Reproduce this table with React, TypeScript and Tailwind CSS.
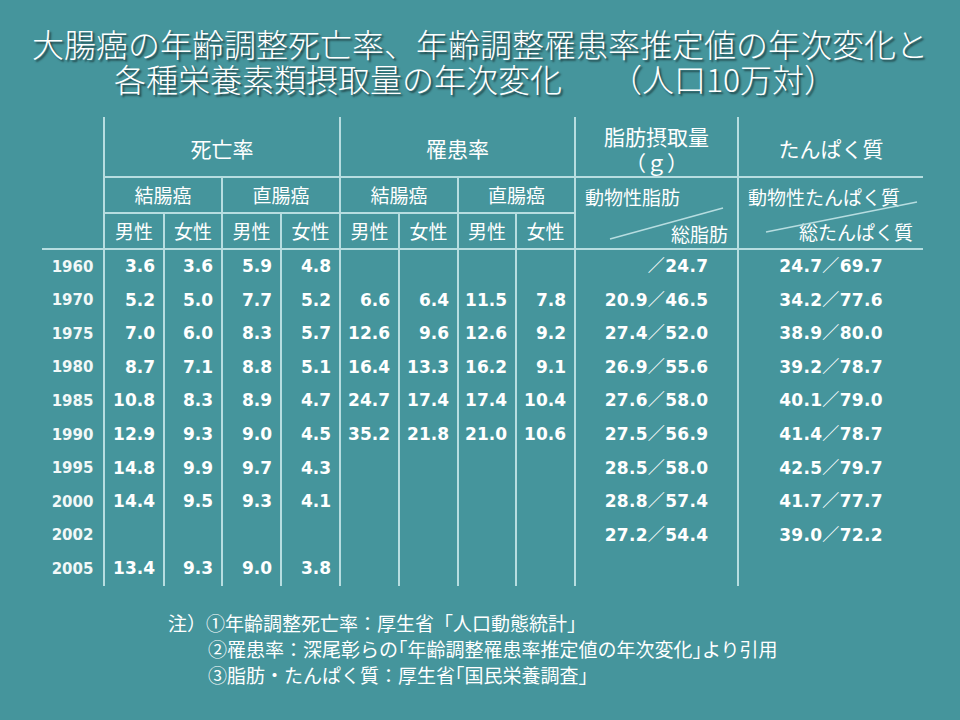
import React from 'react';

const LINE = 'border-[#b7dde0]';
const JP = "font-['Noto_Sans_CJK_JP',sans-serif]";
const NUM = "font-['DejaVu_Sans','Noto_Sans_CJK_JP',sans-serif]";

type Row = {
  year: string;
  vals: string[];
  fat: [string, string];
  protein: string;
};

const rows: Row[] = [
  { year: '1960', vals: ['3.6', '3.6', '5.9', '4.8', '', '', '', ''], fat: ['', '24.7'], protein: '24.7／69.7' },
  { year: '1970', vals: ['5.2', '5.0', '7.7', '5.2', '6.6', '6.4', '11.5', '7.8'], fat: ['20.9', '46.5'], protein: '34.2／77.6' },
  { year: '1975', vals: ['7.0', '6.0', '8.3', '5.7', '12.6', '9.6', '12.6', '9.2'], fat: ['27.4', '52.0'], protein: '38.9／80.0' },
  { year: '1980', vals: ['8.7', '7.1', '8.8', '5.1', '16.4', '13.3', '16.2', '9.1'], fat: ['26.9', '55.6'], protein: '39.2／78.7' },
  { year: '1985', vals: ['10.8', '8.3', '8.9', '4.7', '24.7', '17.4', '17.4', '10.4'], fat: ['27.6', '58.0'], protein: '40.1／79.0' },
  { year: '1990', vals: ['12.9', '9.3', '9.0', '4.5', '35.2', '21.8', '21.0', '10.6'], fat: ['27.5', '56.9'], protein: '41.4／78.7' },
  { year: '1995', vals: ['14.8', '9.9', '9.7', '4.3', '', '', '', ''], fat: ['28.5', '58.0'], protein: '42.5／79.7' },
  { year: '2000', vals: ['14.4', '9.5', '9.3', '4.1', '', '', '', ''], fat: ['28.8', '57.4'], protein: '41.7／77.7' },
  { year: '2002', vals: ['', '', '', '', '', '', '', ''], fat: ['27.2', '54.4'], protein: '39.0／72.2' },
  { year: '2005', vals: ['13.4', '9.3', '9.0', '3.8', '', '', '', ''], fat: ['', ''], protein: '' },
];

const widths = [61, 60, 58, 59, 59, 59, 59, 58, 59, 163, 186];

const DataTable: React.FC = () => (
  <table className="table-fixed border-separate border-spacing-0 w-[881px] text-white">
    <colgroup>
      {widths.map((w, i) => (
        <col key={i} style={{ width: w }} />
      ))}
    </colgroup>
    <thead className={JP}>
      <tr className="h-[61px]">
        <th rowSpan={3} className={`border-b-2 ${LINE}`} />
        <th colSpan={4} className={`border-l-2 border-b-2 ${LINE} text-[21px] font-normal pt-1`}>死亡率</th>
        <th colSpan={4} className={`border-l-2 border-b-2 ${LINE} text-[21px] font-normal pt-1`}>罹患率</th>
        <th className={`border-l-2 border-b-2 ${LINE} text-[21px] font-normal leading-[26px] pt-1`}>
          <div>脂肪摂取量</div>
          <div>（ｇ）</div>
        </th>
        <th className={`border-l-2 border-b-2 ${LINE} text-[21px] font-normal pt-1`}>たんぱく質</th>
      </tr>
      <tr className="h-[35px] text-[19px]">
        <th colSpan={2} className={`border-l-2 border-b-2 ${LINE} font-normal`}>結腸癌</th>
        <th colSpan={2} className={`border-l-2 border-b-2 ${LINE} font-normal`}>直腸癌</th>
        <th colSpan={2} className={`border-l-2 border-b-2 ${LINE} font-normal`}>結腸癌</th>
        <th colSpan={2} className={`border-l-2 border-b-2 ${LINE} font-normal`}>直腸癌</th>
        <th rowSpan={2} className={`relative align-top border-l-2 border-b-2 ${LINE} font-normal p-0`}>
          <div className="px-[9px] leading-[28px]">
            <div className="mt-[5px] text-left">動物性脂肪</div>
            <div className="mt-[9px] text-right">総脂肪</div>
          </div>
          <svg className="absolute left-0 top-0" width="161" height="70" viewBox="0 0 161 70">
            <line x1="34" y1="61" x2="147" y2="30" stroke="#b7dde0" strokeWidth="1.5" />
          </svg>
        </th>
        <th rowSpan={2} className={`relative align-top border-l-2 border-b-2 ${LINE} font-normal p-0`}>
          <div className="pl-[9px] pr-[10px] leading-[28px]">
            <div className="mt-[5px] text-left">動物性たんぱく質</div>
            <div className="mt-[7px] text-right">総たんぱく質</div>
          </div>
          <svg className="absolute left-0 top-0" width="184" height="70" viewBox="0 0 184 70">
            <line x1="27" y1="54" x2="178" y2="24" stroke="#b7dde0" strokeWidth="1.5" />
          </svg>
        </th>
      </tr>
      <tr className="h-[35px] text-[19px]">
        {['男性', '女性', '男性', '女性', '男性', '女性', '男性', '女性'].map((t, i) => (
          <th key={i} className={`border-l-2 border-b-2 ${LINE} font-normal`}>
            {t}
          </th>
        ))}
      </tr>
    </thead>
    <tbody className={NUM}>
      {rows.map((r) => (
        <tr key={r.year} className="h-[33.6px]">
          <td className="text-center text-[15px] font-bold text-[#f2f8f8]">{r.year}</td>
          {r.vals.map((v, i) => (
            <td key={i} className={`border-l-2 ${LINE} text-right pr-[8px] text-[17px] font-bold`}>
              {v}
            </td>
          ))}
          <td className={`border-l-2 ${LINE} text-center text-[17px] font-bold tracking-[0.3px]`}>
            {r.fat[1] && (
              <>
                <span className={r.fat[0] ? '' : 'invisible'}>{r.fat[0] || '20.9'}</span>／{r.fat[1]}
              </>
            )}
          </td>
          <td className={`border-l-2 ${LINE} text-center text-[17px] font-bold tracking-[0.3px]`}>{r.protein}</td>
        </tr>
      ))}
    </tbody>
  </table>
);

const App: React.FC = () => {
  return (
    <div className={`w-[960px] h-[720px] bg-[#45959c] overflow-hidden ${JP}`}>
      <div className="pt-[26px] text-center text-white text-[32px] leading-[35px] font-light [text-shadow:2px_2px_2px_rgba(0,0,0,0.55)]">
        <div>大腸癌の年齢調整死亡率、年齢調整罹患率推定値の年次変化と</div>
        <div className="pr-[10px]">各種栄養素類摂取量の年次変化　　（人口10万対）</div>
      </div>
      <div className="mt-[21px] pl-[42px]">
        <DataTable />
      </div>
      <div className="mt-[24px] pl-[168px] text-white text-[19px] leading-[26px]">
        <div>注）①年齢調整死亡率：厚生省「人口動態統計」</div>
        <div className="pl-[40px]">②罹患率：深尾彰らの｢年齢調整罹患率推定値の年次変化｣より引用</div>
        <div className="pl-[40px]">③脂肪・たんぱく質：厚生省｢国民栄養調査」</div>
      </div>
    </div>
  );
};

export default App;
